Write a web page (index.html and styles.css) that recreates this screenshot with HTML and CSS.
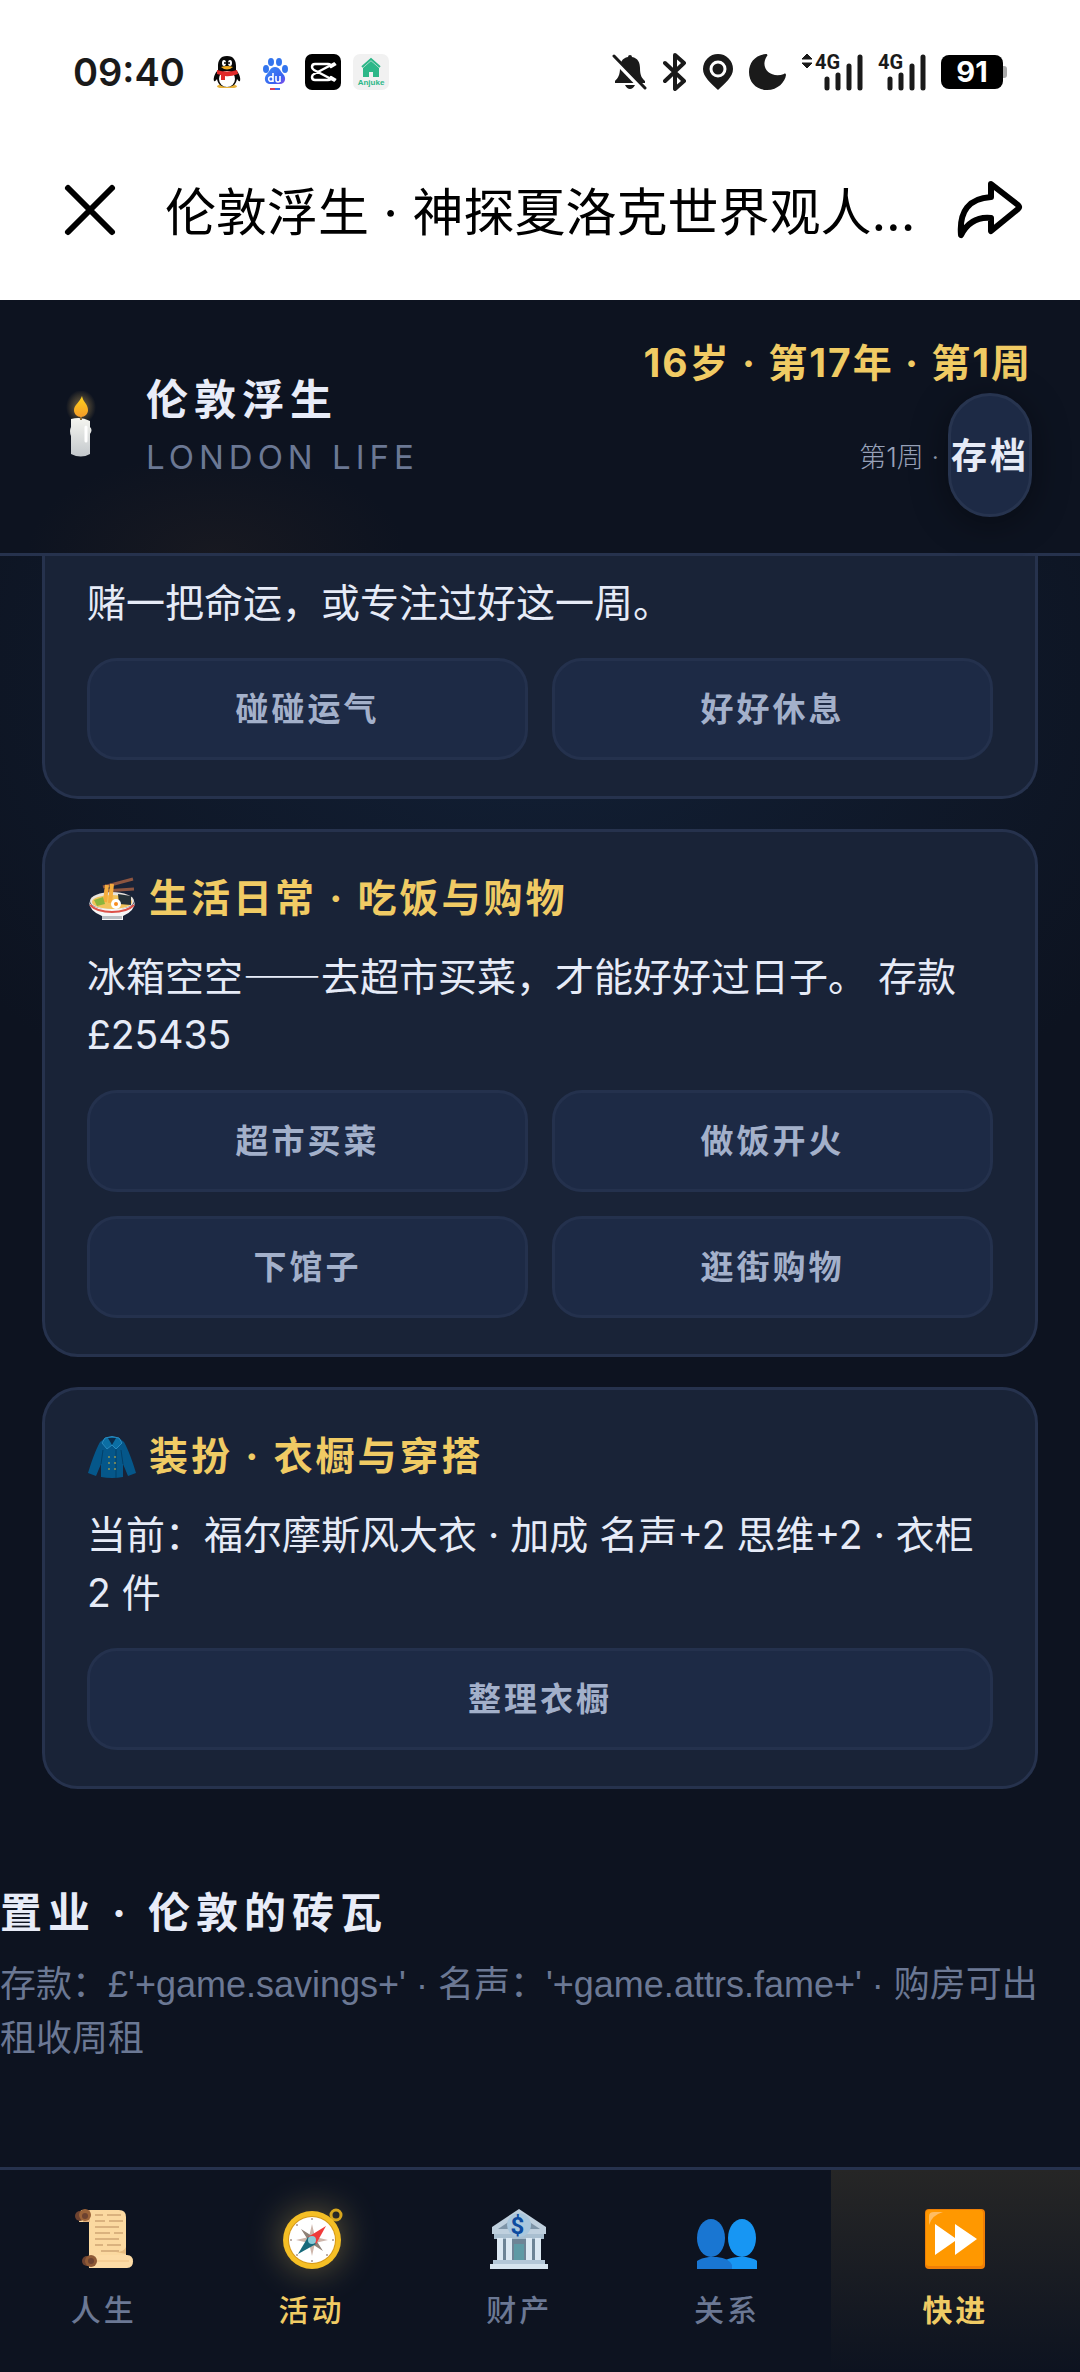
FILE: index.html
```html
<!DOCTYPE html>
<html lang="zh-CN">
<head>
<meta charset="utf-8">
<meta name="viewport" content="width=device-width, initial-scale=1">
<title>伦敦浮生</title>
<link rel="stylesheet" href="styles.css">
</head>
<body>
<div class="status">
  <span class="clock">09:40</span>
  <div class="apps">
    <svg width="36" height="36" viewBox="0 0 36 36">
      <path d="M8 32q5-4 10-1q5-3 10 1q0 2-5 2h-10q-5 0-5-2z" fill="#e8b23a"/>
      <path d="M18 2C11 2 9 7 9 12v4C6 19 4 24 5 27c1 1 2-1 3-2 1 6 5 8 10 8s9-2 10-8c1 1 2 3 3 2 1-3-1-8-4-11v-4C27 7 25 2 18 2z" fill="#080808"/>
      <ellipse cx="18" cy="25" rx="8" ry="8" fill="#fff"/>
      <ellipse cx="15" cy="9" rx="2" ry="3" fill="#fff"/><ellipse cx="21" cy="9" rx="2" ry="3" fill="#fff"/>
      <circle cx="16" cy="9" r="1" fill="#000"/><circle cx="20" cy="9" r="1" fill="#000"/>
      <path d="M12 13q6-2 12 0q-6 5-12 0z" fill="#f0a91e"/>
      <path d="M8 16q10 3 20 0l1 4q-8 3-13 2v4h-4v-5l-4-1z" fill="#e02a2a"/>
    </svg>
    <svg width="36" height="36" viewBox="0 0 36 36">
      <defs><linearGradient id="paw" x1="0" y1="0" x2="1" y2="1"><stop offset="0" stop-color="#3b8cf5"/><stop offset=".7" stop-color="#3a62f0"/><stop offset="1" stop-color="#8a4be8"/></linearGradient></defs>
      <g fill="#3375ee"><ellipse cx="9" cy="15" rx="3" ry="4"/><ellipse cx="14" cy="8" rx="3" ry="4"/><ellipse cx="22" cy="8" rx="3" ry="4"/><ellipse cx="28" cy="15" rx="3" ry="4"/></g>
      <path d="M18 13c5 0 5 4 8 7 4 4 2 10-3 10H13c-5 0-7-6-3-10 3-3 3-7 8-7z" fill="url(#paw)"/>
      <path d="M16 19v9m0-4a2.300 2.300 0 1 0 0 2M19 22v4q0 2 2 2t2-2v-4v6" fill="none" stroke="#fff" stroke-width="1.600"/>
      <path d="M13 35h5" stroke="#d8405a" stroke-width="2"/><path d="M18 35h5" stroke="#3b6ff0" stroke-width="2"/>
    </svg>
    <svg width="36" height="36" viewBox="0 0 36 36">
      <rect width="36" height="36" rx="7"/>
      <path d="M31 10l-5 3q0-3-3-3H10q-3 0-3 3 0 2 2 3l21 11M31 26l-5-3q0 3-3 3H10q-3 0-3-3 0-2 2-3L30 9" fill="none" stroke="#fff" stroke-width="2.500" stroke-linejoin="round"/>
    </svg>
    <svg width="36" height="36" viewBox="0 0 36 36">
      <rect width="36" height="36" rx="7" fill="#f1f1f1"/>
      <path d="M9 13l9-8 9 8" fill="none" stroke="#2db788" stroke-width="2"/>
      <path d="M18 7l8 7v9h-6v-5h-4v5h-6v-9z" fill="#2db788"/>
      <text x="18" y="31" text-anchor="middle" class="mini">Anjuke</text>
    </svg>
  </div>
  <div class="signals">
    <svg width="36" height="38" viewBox="0 0 36 38">
      <path d="M18 2q2 0 2 2c6 1 8 6 8 11 0 8 2 10 5 13v2H3v-2c3-3 5-6 5-13 0-5 2-10 8-11q0-2 2-2zM13 32h10q-2 4-5 4t-5-4z" fill="#1a1a1a"/>
      <path d="M1 6l30 31" stroke="#fff" stroke-width="4"/><path d="M2 3l31 32" stroke="#1a1a1a" stroke-width="3" stroke-linecap="round"/>
    </svg>
    <svg width="24" height="38" viewBox="0 0 24 38">
      <path d="M2 10l19 18-9 8V2l9 8L2 28" fill="none" stroke="#1a1a1a" stroke-width="4" stroke-linecap="round" stroke-linejoin="round"/>
    </svg>
    <svg width="32" height="38" viewBox="0 0 32 38">
      <path d="M16 1a15 15 0 0 0-15 15c0 8 8 14 15 21 7-7 15-13 15-21A15 15 0 0 0 16 1z" fill="#1a1a1a"/>
      <circle cx="16" cy="16" r="7" fill="none" stroke="#fff" stroke-width="3"/>
    </svg>
    <svg width="38" height="38" viewBox="0 0 38 38">
      <path d="M17 1C6 2 0 10 0 19c0 11 8 18 18 18 11 0 18-8 19-15 0-1-1-2-2-1C22 26 10 15 18 3c1-1 0-2-1-2z" fill="#1a1a1a"/>
    </svg>
    <svg width="61" height="54" viewBox="0 -8 61 54">
      <path d="M5 1l5 5H0zM5 15l5-5H0z" fill="#1a1a1a" stroke="#1a1a1a"/>
      <text x="13" y="16" class="gen">4G</text>
      <path d="M25 26v9M36 22v13M47 13v22M58 4v31" stroke="#1a1a1a" stroke-width="5" stroke-linecap="round"/>
    </svg>
    <svg width="48" height="54" viewBox="0 -8 48 54">
      <text x="0" y="16" class="gen">4G</text>
      <path d="M12 26v9M23 22v13M34 13v22M45 4v31" stroke="#1a1a1a" stroke-width="5" stroke-linecap="round"/>
    </svg>
    <span class="battery">91</span>
  </div>
</div>

<div class="titlebar">
  <button class="plain" type="button" aria-label="关闭">
    <svg width="54" height="54" viewBox="0 0 54 54"><path d="M5 5l44 44M49 5L5 49" stroke="#000" stroke-width="6" stroke-linecap="round"/></svg>
  </button>
  <div class="page-title">伦敦浮生 · 神探夏洛克世界观人...</div>
  <button class="plain" type="button" aria-label="分享">
    <svg width="66" height="60" viewBox="0 0 66 60"><path d="M34 4l27 21q2 2 0 4L34 51V38Q14 36 4 55 1 19 34 17z" fill="none" stroke="#000" stroke-width="6" stroke-linejoin="round"/></svg>
  </button>
</div>

<header class="header">
  <svg width="66" height="72" viewBox="0 0 66 72">
    <defs>
      <radialGradient id="halo"><stop offset="0" stop-color="#f7c86a" stop-opacity=".5"/><stop offset="1" stop-color="#f7c86a" stop-opacity="0"/></radialGradient>
      <linearGradient id="flame" x1="0" y1="0" x2="0" y2="1"><stop offset="0" stop-color="#ffd31c"/><stop offset="1" stop-color="#f49b28"/></linearGradient>
      <linearGradient id="wax" x1="0" y1="0" x2="0" y2="1"><stop offset="0" stop-color="#f5f5f0"/><stop offset="1" stop-color="#c3c8cc"/></linearGradient>
    </defs>
    <ellipse cx="33" cy="16" rx="15" ry="17" fill="url(#halo)"/>
    <path d="M23 28q10-3 19 2v6q3 3 0 7v20q-9 5-19 0V45q-2-5 0-9z" fill="url(#wax)"/>
    <path d="M38 36v14" stroke="#fff" stroke-width="3" stroke-linecap="round"/>
    <path d="M33 23v6" stroke="#8a6a35" stroke-width="2"/>
    <path d="M34 5c1 6 6 8 6 14 0 4-3 7-7 7s-7-3-7-7c0-5 6-8 8-14z" fill="url(#flame)"/>
  </svg>
  <div class="brand">
    <h1>伦敦浮生</h1>
    <p>LONDON LIFE</p>
  </div>
  <div class="progress">
    <strong>16岁 · 第17年 · 第1周</strong>
    <div class="save-row">
      <span>第1周 ·</span>
      <button class="save" type="button">存档</button>
    </div>
  </div>
</header>

<main class="content">
  <div class="cards">
    <section class="card card-under">
      <p>赌一把命运，或专注过好这一周。</p>
      <div class="actions">
        <button type="button">碰碰运气</button>
        <button type="button">好好休息</button>
      </div>
    </section>
    <section class="card">
      <h2>
        <svg width="50" height="45" viewBox="0 0 50 45">
          <path d="M16 11L46 3M17 15l30-2" stroke="#8d5540" stroke-width="3"/>
          <ellipse cx="25" cy="25" rx="22" ry="9" fill="#e9e4dc"/>
          <ellipse cx="25" cy="26" rx="20" ry="7" fill="#f2c35b"/>
          <path d="M18 26L20 9m3 18L25 8" stroke="#f5ad3d" stroke-width="4"/>
          <path d="M31 18l13 2v9l-12-1z" fill="#263238"/><path d="M7 24l9-3 2 7-8 2z" fill="#8bb53c"/>
          <circle cx="29" cy="28" r="5" fill="#fff"/><circle cx="29" cy="28" r="2" fill="#f78c1f"/>
          <path d="M2 25q2 8 23 8t23-8q0 10-12 15v4H15v-4Q2 35 2 25z" fill="#f6f6f6"/>
          <path d="M3 29q7 7 22 7t22-7" fill="none" stroke="#dd5148" stroke-width="2"/>
          <path d="M15 40h20v3H15z" fill="#b9bec2"/>
        </svg>
        生活日常 · 吃饭与购物
      </h2>
      <p>冰箱空空<span class="dash">——</span>去超市买菜，才能好好过日子。 存款 £25435</p>
      <div class="actions">
        <button type="button">超市买菜</button>
        <button type="button">做饭开火</button>
        <button type="button">下馆子</button>
        <button type="button">逛街购物</button>
      </div>
    </section>
    <section class="card">
      <h2>
        <svg width="50" height="45" viewBox="0 0 50 45">
          <path d="M18 4L13 8C8 17 4 29 1 39l8 3 5-12v13q11 2 22 0V30l5 12 8-3C46 29 42 17 37 8l-5-4z" fill="#05578a"/>
          <path d="M14 30l2-14M36 30l-2-14M29 14v30" fill="none" stroke="#034069" stroke-width="1"/>
          <path d="M18 4q7-3 14 0l3 5-6 6-4-4-5 4-5-6z" fill="#0b6ea3" stroke="#2a8abf" stroke-width="1"/>
          <path d="M21 4h8l-4 7z" fill="#0a2a48"/>
          <g fill="#8f9355"><circle cx="22" cy="23" r="1"/><circle cx="28" cy="23" r="1"/><circle cx="22" cy="29" r="1"/><circle cx="28" cy="29" r="1"/><circle cx="22" cy="35" r="1"/><circle cx="28" cy="35" r="1"/></g>
        </svg>
        装扮 · 衣橱与穿搭
      </h2>
      <p>当前：福尔摩斯风大衣 · 加成 名声+2 思维+2 · 衣柜 2&nbsp;件</p>
      <div class="actions actions-single">
        <button type="button">整理衣橱</button>
      </div>
    </section>
  </div>
  <section class="estate">
    <h2>置业 · 伦敦的砖瓦</h2>
    <p>存款：£'+game.savings+' · 名声：'+game.attrs.fame+' · 购房可出租收周租</p>
  </section>
</main>

<nav class="tabs">
  <a href="#life">
    <svg width="66" height="66" viewBox="0 0 66 66">
      <path d="M10 4h38q7 0 7 7v43H18V16H8z" fill="#fbd9a0"/>
      <path d="M13 4h6v12h-7z" fill="#e2b27c"/><circle cx="9" cy="10" r="5" fill="#6d4230"/><circle cx="14" cy="9" r="6" fill="#9a6238"/><circle cx="14" cy="10" r="3" fill="#6d4230"/>
      <path d="M24 9h8m4 0h14M24 15h10m4 0h14M24 21h24M24 27h15m4 0h9M24 33h24M24 39h8m4 0h14M30 45h18" stroke="#b98b5d" stroke-width="1"/>
      <path d="M45 46q8 0 10-5v7z" fill="#e8bd80"/>
      <path d="M18 49h38q6 0 6 6.500T56 62H18z" fill="#fddca6"/><path d="M18 55h40" stroke="#f0c284" stroke-width="1"/>
      <circle cx="16" cy="55" r="5" fill="#6d4230"/><circle cx="20" cy="55" r="6" fill="#8f5a36"/><circle cx="20" cy="55" r="3" fill="#6d4230"/>
    </svg>
    <span>人生</span>
  </a>
  <a href="#activity" class="active">
    <svg width="66" height="66" viewBox="0 0 66 66">
      <circle cx="57" cy="9" r="5" fill="none" stroke="#d8a61d" stroke-width="3"/>
      <circle cx="33" cy="34" r="29" fill="#f5bf25"/><circle cx="33" cy="34" r="24" fill="#d79a1a"/><circle cx="33" cy="34" r="23" fill="#fff"/>
      <path d="M33 18l3 13 13 3-13 3-3 13-3-13-13-3 13-3z" fill="#cdb5aa"/><path d="M22 23l11 7 11-7-7 11 7 11-11-7-11 7 7-11z" fill="#8e8177"/>
      <path d="M47 20L37 38l-8-7z" fill="#f03b3b"/><path d="M19 48l10-17 8 7z" fill="#176a7c"/><circle cx="33" cy="34" r="4" fill="#8bcbd8"/>
      <g fill="#a7968e"><circle cx="33" cy="13" r="1"/><circle cx="33" cy="55" r="1"/><circle cx="12" cy="34" r="1"/><circle cx="54" cy="34" r="1"/><circle cx="18" cy="19" r="1"/><circle cx="18" cy="49" r="1"/><circle cx="48" cy="49" r="1"/></g>
    </svg>
    <span>活动</span>
  </a>
  <a href="#assets">
    <svg width="66" height="66" viewBox="0 0 66 66">
      <path d="M33 3l27 18v7H6v-7z" fill="#bfd0de"/><path d="M12 23l21-14 21 14z" fill="#7e95a8"/>
      <path d="M8 28h50v5H8z" fill="#a9bfd0"/><path d="M13 33h40v22H13z" fill="#6d8496"/>
      <path d="M11 32h6v23h-6zM20 32h6v23h-6zM40 32h6v23h-6zM49 32h6v23h-6z" fill="#dce9f3"/>
      <path d="M28 38h10v17H28z" fill="#5e9aa5"/>
      <circle cx="33" cy="19" r="12" fill="#a9c7dd"/>
      <text x="33" y="28" text-anchor="middle" class="coin">$</text>
      <path d="M7 54h52v4H7z" fill="#b3c7d8"/><path d="M4 58h58v5H4z" fill="#d6e4ef"/>
    </svg>
    <span>财产</span>
  </a>
  <a href="#people">
    <svg width="66" height="66" viewBox="0 0 66 66">
      <path d="M28 63V57q4-5 16-6h8q10 2 11 4v8z" fill="#1796f3"/><ellipse cx="48" cy="32" rx="14" ry="19" fill="#1796f3"/>
      <path d="M3 63v-8q4-3 12-4h8q12 1 15 8v4z" fill="#1976d2"/><ellipse cx="17" cy="32" rx="14" ry="19" fill="#1976d2"/>
    </svg>
    <span>关系</span>
  </a>
  <a href="#skip" class="skip">
    <svg width="66" height="66" viewBox="0 0 66 66">
      <rect x="3" y="3" width="60" height="60" rx="4" fill="#ef7f06"/><rect x="4" y="4" width="57" height="56" rx="3" fill="#ff9800"/>
      <path d="M7 19V10q0-4 5-4h9Q10 9 7 19z" fill="#ffbd62"/>
      <path d="M13 18v31l20-14v14l22-16-22-15v14z" fill="#fff"/>
    </svg>
    <span>快进</span>
  </a>
</nav>
</body>
</html>
```

FILE: styles.css
```css
* { box-sizing: border-box; }

body {
  margin: 0;
  min-height: 100vh;
  display: flex;
  flex-direction: column;
  background: #0d1320;
  color: #e6ebf7;
  font-family: Inter, "Noto Sans CJK SC", sans-serif;
  font-size: 39px;
}

h1, h2, p { margin: 0; }
svg { display: block; flex: none; }
button { font-family: inherit; cursor: pointer; }

.status {
  height: 144px;
  padding: 0 72px 0 73px;
  display: flex;
  align-items: center;
  background: #fff;
  color: #1a1a1a;
}
.clock { font: 600 38px/48px Inter, sans-serif; }
.apps { display: flex; gap: 12px; margin-left: 24px; }
.signals { display: flex; align-items: center; gap: 15px; margin-left: auto; }
.mini { font: 700 8px "Liberation Sans", sans-serif; fill: #2db788; }
.gen { font: 700 20px Roboto, sans-serif; fill: #1a1a1a; }
.coin { font: 700 24px Roboto, sans-serif; fill: #0d4ba0; }
.battery {
  position: relative;
  width: 62px;
  height: 34px;
  margin-right: 5px;
  border-radius: 8px;
  background: #000;
  color: #fff;
  text-align: center;
  font: 700 29px/34px Inter, sans-serif;
}
.battery::after {
  content: "";
  position: absolute;
  left: 100%;
  top: 11px;
  width: 4px;
  height: 12px;
  border-radius: 0 3px 3px 0;
  background: #aaa;
}

.titlebar {
  height: 156px;
  padding: 0 57px 24px 63px;
  display: flex;
  align-items: center;
  background: #fff;
  color: #000;
}
.page-title {
  flex: 1;
  min-width: 0;
  margin: 0 24px 0 48px;
  padding-top: 6px;
  white-space: nowrap;
  font-size: 51px;
  line-height: 72px;
}
.plain { padding: 0; border: 0; background: none; }

.header {
  height: 256px;
  padding: 0 48px;
  display: flex;
  align-items: center;
  border-bottom: 3px solid #26324d;
  background:
    radial-gradient(ellipse 190px 100px at 20% 100%, rgba(70, 50, 35, .18), transparent),
    #0d1320;
}
.brand { margin-left: 32px; }
.brand h1 { font-size: 42px; line-height: 60px; font-weight: 700; letter-spacing: 6px; color: #e8ecf8; }
.brand p { font-size: 33px; line-height: 54px; letter-spacing: 5px; color: #6b7894; }
.progress { margin-left: auto; display: flex; flex-direction: column; align-items: flex-end; }
.progress strong { font-weight: 700; font-size: 39px; line-height: 54px; padding-bottom: 3px; letter-spacing: 2px; color: #f0cb64; }
.save-row { display: flex; align-items: center; gap: 9px; color: #97a1b8; font-size: 27px; font-weight: 300; }
.save {
  width: 84px;
  height: 124px;
  padding: 0 0 4px;
  display: flex;
  align-items: center;
  justify-content: center;
  border: 3px solid #27344f;
  border-radius: 42px;
  background: #1d2a45;
  box-shadow: 0 6px 36px rgba(0, 0, 0, .4);
  color: #e6ebf7;
  font-size: 36px;
  font-weight: 700;
  letter-spacing: 3px;
  white-space: nowrap;
}

.content {
  flex: 1;
  background: radial-gradient(ellipse 700px 520px at 50% 120px, #122036, transparent);
}
.cards { padding: 0 42px; display: flex; flex-direction: column; gap: 30px; }
.card {
  padding: 36px 42px;
  border: 3px solid #26324d;
  border-radius: 36px;
  background: #192337;
}
.card-under { padding-top: 18px; border-top: 0; border-radius: 0 0 36px 36px; }
.card h2 {
  margin-bottom: 20px;
  display: flex;
  align-items: center;
  gap: 12px;
  font-size: 39px;
  line-height: 60px;
  font-weight: 700;
  letter-spacing: 3px;
  color: #f0cb64;
}
.card p { line-height: 58px; }
.dash { font-family: "Noto Sans CJK SC", sans-serif; font-weight: 500; line-height: 1; }
.actions {
  margin-top: 26px;
  display: grid;
  grid-template-columns: 1fr 1fr;
  gap: 24px;
}
.actions-single { grid-template-columns: 1fr; }
.actions button {
  height: 102px;
  padding: 0 0 4px;
  border: 3px solid #24314d;
  border-radius: 30px;
  background: #1d2a45;
  color: #a3b0ca;
  font-size: 33px;
  font-weight: 700;
  letter-spacing: 3px;
}

.estate { padding: 91px 0 72px; }
.estate h2 { font-size: 42px; line-height: 66px; font-weight: 700; letter-spacing: 6px; color: #e8ecf8; }
.estate p {
  margin-top: 12px;
  padding-right: 12px;
  font-family: "Liberation Sans", "Noto Sans CJK SC", sans-serif;
  font-size: 36px;
  line-height: 54px;
  color: #6b7894;
}

.tabs {
  height: 205px;
  display: grid;
  grid-template-columns: 5fr 5fr 5fr 5fr 6fr;
  border-top: 3px solid #26324d;
  background: #0d1320;
}
.tabs a {
  padding-top: 36px;
  display: flex;
  flex-direction: column;
  align-items: center;
  gap: 16px;
  color: #6b7894;
  font-size: 30px;
  line-height: 45px;
  font-weight: 500;
  letter-spacing: 3px;
  text-decoration: none;
}
.tabs .active { color: #f0cb64; }
.tabs .active svg { filter: drop-shadow(0 0 18px rgba(240, 203, 100, .4)); }
.tabs .skip { color: #f0cb64; font-weight: 700; background: linear-gradient(#262626, #0d1320); }
```
